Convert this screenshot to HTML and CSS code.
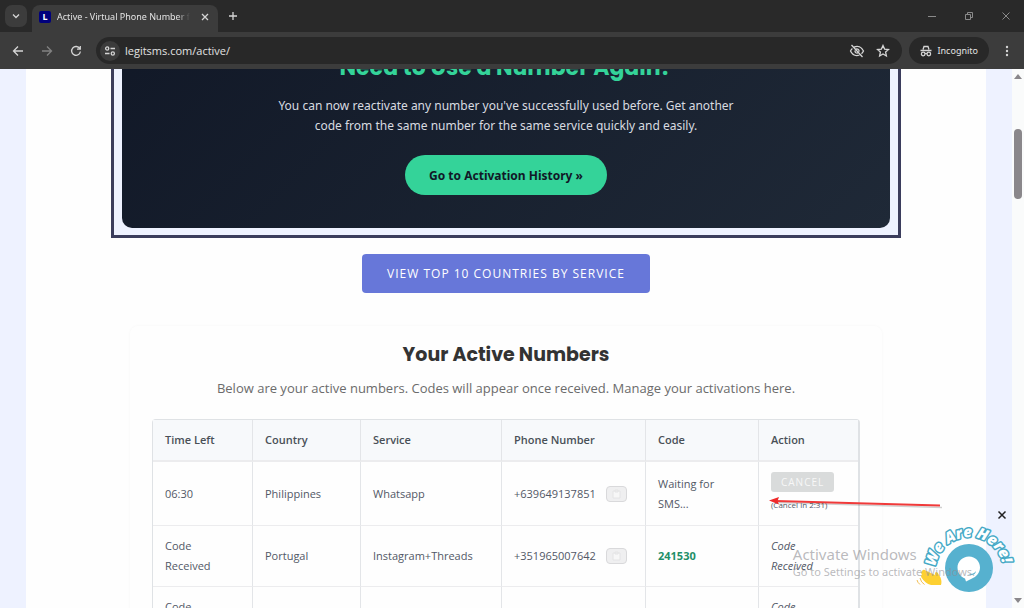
FILE: index.html
```html
<!DOCTYPE html>
<html lang="en">

<head>
    <meta charset="UTF-8" />
    <meta name="viewport" content="width=device-width, initial-scale=1.0" />
    <title>Active - Virtual Phone Number</title>
    <link rel="stylesheet" href="styles.css">
</head>

<body>
    <header class="browser">
        <div class="tab-strip">
            <button class="tab-search" aria-label="Search tabs">
                <svg width="10" height="10" viewBox="0 0 10 10"><path d="M2 3.5l3 3 3-3" /></svg>
            </button>
            <div class="tab">
                <span class="favicon">L</span>
                <span class="tab-title">Active - Virtual Phone Number f</span>
                <button class="icon-button" aria-label="Close tab">
                    <svg width="10" height="10" viewBox="0 0 10 10"><path d="M2 2l6 6M8 2l-6 6" /></svg>
                </button>
            </div>
            <button class="icon-button new-tab" aria-label="New tab">
                <svg width="10" height="10" viewBox="0 0 10 10"><path d="M5 1v8M1 5h8" /></svg>
            </button>
            <div class="window-buttons">
                <button class="icon-button" aria-label="Minimize">
                    <svg width="10" height="10" viewBox="0 0 10 10"><path d="M1 5.5h8" /></svg>
                </button>
                <button class="icon-button" aria-label="Restore">
                    <svg width="10" height="10" viewBox="0 0 10 10"><path d="M1.5 3.5h5v5h-5zM3.500 3V1.500h5v5H7" /></svg>
                </button>
                <button class="icon-button" aria-label="Close">
                    <svg width="10" height="10" viewBox="0 0 10 10"><path d="M1.500 1.500l7 7M8.500 1.500l-7 7" /></svg>
                </button>
            </div>
        </div>

        <div class="toolbar">
            <button class="icon-button" aria-label="Back">
                <svg width="12" height="12" viewBox="0 0 12 12"><path d="M11 6H2M6 1.500L1.500 6 6 10.500" /></svg>
            </button>
            <button class="icon-button dim" aria-label="Forward">
                <svg width="12" height="12" viewBox="0 0 12 12"><path d="M1 6h9M6 1.500L10.500 6 6 10.500" /></svg>
            </button>
            <button class="icon-button" aria-label="Reload">
                <svg width="12" height="12" viewBox="0 0 12 12"><path d="M9.800 3.600A4.400 4.400 0 1 0 10.400 6.500M10.300 1v3.200H7" /></svg>
            </button>
            <div class="address-bar">
                <button class="site-info" aria-label="View site information">
                    <svg width="12" height="12" viewBox="0 0 12 12"><circle cx="3.200" cy="3.500" r="1.600" /><path d="M6.500 3.500H11M1 8.500h4.500" /><circle cx="8.800" cy="8.500" r="1.600" /></svg>
                </button>
                <input class="url" type="text" value="legitsms.com/active/" aria-label="Address" />
                <button class="icon-button" aria-label="Third-party cookies blocked">
                    <svg width="16" height="14" viewBox="0 0 16 14"><path d="M5 3.100C8.800 1.300 12.500 3 14.500 7c-.5 1.100-1.200 2-2 2.700M10.500 11C6.800 12.300 3.300 10.700 1.500 7c.5-1 1.100-1.800 1.900-2.500M7 5c1.800-.7 3.500.9 3 2.600M8.800 9.100C7.200 9.500 5.700 8.300 6 6.500M2.500 1l11 12" /></svg>
                </button>
                <button class="icon-button" aria-label="Bookmark this tab">
                    <svg width="14" height="14" viewBox="0 0 14 14"><path d="M7 1.500l1.600 3.600 3.900.4-2.900 2.600.8 3.900L7 10l-3.400 2 .8-3.900-2.900-2.600 3.900-.4z" /></svg>
                </button>
            </div>
            <button class="incognito">
                <svg width="12" height="12" viewBox="0 0 12 12"><path d="M3 4.500L4 1.500h4l1 3M.5 5.500h11" /><circle cx="3.200" cy="9" r="1.800" /><circle cx="8.800" cy="9" r="1.800" /><path d="M5 8.700q1-.6 2 0" /></svg>
                Incognito
            </button>
            <button class="icon-button menu" aria-label="Menu">
                <svg width="4" height="14" viewBox="0 0 4 14"><circle cx="2" cy="3" r="1.200" /><circle cx="2" cy="7" r="1.200" /><circle cx="2" cy="11" r="1.200" /></svg>
            </button>
        </div>
    </header>

    <div class="viewport">
        <div class="page">
            <main class="content">
                <section class="promo-frame">
                    <div class="promo">
                        <h2>Need to Use a Number Again?</h2>
                        <p>You can now reactivate any number you've successfully used before. Get another<br>code from the same number for the same service quickly and easily.</p>
                        <a class="history-link" href="#">Go to Activation History »</a>
                    </div>
                </section>

                <a class="top-countries" href="#">VIEW TOP 10 COUNTRIES BY SERVICE</a>

                <section class="numbers">
                    <h2>Your Active Numbers</h2>
                    <p>Below are your active numbers. Codes will appear once received. Manage your activations here.</p>

                    <table>
                        <colgroup>
                            <col class="col-time">
                            <col class="col-country">
                            <col class="col-service">
                            <col class="col-phone">
                            <col class="col-code">
                            <col class="col-action">
                        </colgroup>
                        <thead>
                            <tr>
                                <th>Time Left</th>
                                <th>Country</th>
                                <th>Service</th>
                                <th>Phone Number</th>
                                <th>Code</th>
                                <th>Action</th>
                            </tr>
                        </thead>
                        <tbody>
                            <tr>
                                <td>06:30</td>
                                <td>Philippines</td>
                                <td>Whatsapp</td>
                                <td>
                                    <div class="phone">+639649137851
                                        <button class="copy" aria-label="Copy number"><svg width="9" height="10" viewBox="0 0 9 10"><path d="M1 2h7v7H1zM3 1h3v2H3z" /></svg></button>
                                    </div>
                                </td>
                                <td>Waiting for<br>SMS...</td>
                                <td>
                                    <button class="cancel" disabled>CANCEL</button>
                                    <small>(Cancel in 2:31)</small>
                                </td>
                            </tr>
                            <tr>
                                <td>Code<br>Received</td>
                                <td>Portugal</td>
                                <td>Instagram+Threads</td>
                                <td>
                                    <div class="phone">+351965007642
                                        <button class="copy" aria-label="Copy number"><svg width="9" height="10" viewBox="0 0 9 10"><path d="M1 2h7v7H1zM3 1h3v2H3z" /></svg></button>
                                    </div>
                                </td>
                                <td><strong>241530</strong></td>
                                <td><em>Code<br>Received</em></td>
                            </tr>
                            <tr>
                                <td>Code<br>Received</td>
                                <td></td>
                                <td></td>
                                <td></td>
                                <td></td>
                                <td><em>Code<br>Received</em></td>
                            </tr>
                        </tbody>
                    </table>
                </section>
            </main>
        </div>

        <div class="scrollbar">
            <svg width="8" height="5" viewBox="0 0 8 5"><path d="M4 0l4 5H0z" /></svg>
            <div class="track"><div class="thumb"></div></div>
            <svg width="8" height="5" viewBox="0 0 8 5"><path d="M0 0h8L4 5z" /></svg>
        </div>
    </div>

    <!-- arrow pointing at the cancel timer -->
    <svg class="arrow" width="176" height="16" viewBox="0 0 176 16">
        <path class="arrow-shadow" d="M10 6.500l164 5" />
        <path class="arrow-line" d="M8 5l164 4.500" />
        <path class="arrow-head" d="M1 4.500L11 1l-1.500 4L11 8.500z" />
    </svg>

    <!-- chat widget -->
    <div class="chat">
        <button class="chat-close" aria-label="Hide chat">
            <svg width="10" height="10" viewBox="0 0 10 10"><path d="M1.500 1.500l7 7M8.500 1.500l-7 7" /></svg>
        </button>
        <button class="chat-open" aria-label="Open chat">
            <svg width="104" height="80" viewBox="0 0 104 80">
                <defs>
                    <path id="chat-arc" d="M23.500 49A34 34 0 0 1 91 49V56" />
                </defs>
                <text class="chat-label"><textPath href="#chat-arc">We Are Here!</textPath></text>
                <circle cx="57" cy="50" r="24" fill="#56b1cf" />
                <path fill="#fff" d="M57 38.500c6.500 0 11 5 11 11 0 5.500-4 9.500-8 11L54 63.500l-1-3c-4.500-1.500-7.500-6-7.500-11 0-6 5-11 11.500-11z" />
                <path fill="#56b1cf" d="M55 56q6 1 9-3-1 6-9 3z" />
                <path fill="#fdd032" d="M10 53c1-1.500 2.500-1.500 4-.2l9 4.200c-.5-2.500 1-4 2.500-2.500l3 5c1 2.500 1.300 5 .5 7.500H19c-4-1-7.500-4-9.500-7.500-.8-1.500-.5-2.500.5-2.500-1-1.200-1-3 0-4z" />
                <path fill="none" stroke="#f3bd4e" d="M8 60q1 4.500 4.500 6.500M5 62q.5 2.500 3 4.500" />
            </svg>
        </button>
    </div>

    <div class="watermark">
        <div class="watermark-title">Activate Windows</div>
        <div>Go to Settings to activate Windows.</div>
    </div>
</body>

</html>
```
FILE: styles.css
```css
* {
    box-sizing: border-box;
}

body {
    margin: 0;
    height: 100vh;
    display: flex;
    flex-direction: column;
    position: relative;
    overflow: hidden;
    font-family: "Open Sans", sans-serif;
    font-size: 11px;
    line-height: 20px;
    color: #525866;
}

button {
    border: 0;
    padding: 0;
    background: none;
    font-family: inherit;
    cursor: pointer;
}

svg {
    display: block;
}

/* browser window */
.browser {
    background-color: #3c3c3c;
    color: #e3e3e3;
    font-family: "Noto Sans", sans-serif;
}

.browser svg {
    fill: none;
    stroke: #d5d5d5;
    stroke-width: 1.3;
}

.tab-strip {
    height: 32px;
    padding: 5px 9px 0 5px;
    display: flex;
    align-items: flex-start;
    background-color: #292929;
}

.tab-search {
    width: 22px;
    height: 22px;
    display: grid;
    place-items: center;
    border-radius: 7px;
    background-color: #3c3c3c;
}

.tab {
    width: 186px;
    height: 27px;
    margin-left: 5px;
    padding: 0 4px 4px 7px;
    display: flex;
    align-items: center;
    gap: 6px;
    border-radius: 8px 8px 0 0;
    background-color: #3c3c3c;
}

.favicon {
    width: 12px;
    height: 12px;
    border-radius: 2px;
    background-color: #00007c;
    color: white;
    font-size: 9px;
    font-weight: bold;
    line-height: 12px;
    text-align: center;
}

.tab-title {
    flex: 1;
    overflow: hidden;
    white-space: nowrap;
    font-size: 9px;
    -webkit-mask-image: linear-gradient(to right, black 90%, transparent);
    mask-image: linear-gradient(to right, black 90%, transparent);
}

.icon-button {
    width: 18px;
    height: 22px;
    flex: none;
    display: grid;
    place-items: center;
}

.new-tab {
    margin-left: 6px;
}

.window-buttons {
    margin-left: auto;
    display: flex;
    gap: 19px;
}

.window-buttons svg {
    stroke: #8a8a8a;
    stroke-width: 1;
}

.toolbar {
    height: 37px;
    padding: 0 8px 0 9px;
    display: flex;
    align-items: center;
    gap: 11px;
}

.dim {
    opacity: 0.45;
}

.address-bar {
    flex: 1;
    height: 27px;
    margin-right: -4px;
    padding: 0 10px 0 4px;
    display: flex;
    align-items: center;
    gap: 8px;
    border-radius: 14px;
    background-color: #282828;
}

.site-info {
    width: 20px;
    height: 20px;
    margin-right: -3px;
    display: grid;
    place-items: center;
    border-radius: 50%;
    background-color: #3c3c3c;
}

.url {
    flex: 1;
    min-width: 0;
    border: 0;
    padding: 0;
    background: transparent;
    color: #e3e3e3;
    font-family: "Open Sans", sans-serif;
    font-size: 11px;
}

.url:focus {
    outline: none;
}

.incognito {
    height: 27px;
    padding: 0 11px;
    display: flex;
    align-items: center;
    gap: 6px;
    border-radius: 14px;
    background-color: #282828;
    color: #e3e3e3;
    font-size: 9px;
}

.menu {
    margin-left: -2px;
}

.menu svg {
    fill: #d5d5d5;
    stroke: none;
}

/* page, scrolled down a little */
.viewport {
    flex: 1;
    min-height: 0;
    display: flex;
    overflow: hidden;
}

.page {
    flex: 1;
    padding: 0 26px;
    overflow: hidden;
    background-color: #eef2ff;
}

.content {
    margin-top: -61px;
    padding: 0 85px;
    display: flex;
    flex-direction: column;
    align-items: center;
    background-color: #fefefe;
}

h2 {
    margin: 0;
    font-family: Poppins, Inter, sans-serif;
    font-weight: bold;
    text-align: center;
}

.promo-frame {
    width: 100%;
    padding: 7px 8px;
    border: 3px solid #3b3d5c;
    background-color: #eef2ff;
}

.promo {
    padding: 33px;
    border-radius: 10px;
    background: linear-gradient(135deg, #111827, #1f2937);
    text-align: center;
}

.promo h2 {
    color: #34d399;
    font-size: 22px;
    line-height: 34px;
}

.promo p {
    margin: 11px 0 19px;
    color: #d8dbe0;
    font-family: "Noto Sans", sans-serif;
    font-size: 12px;
}

.history-link {
    display: inline-block;
    padding: 1px 24px 0;
    border-radius: 20px;
    background-color: #34d399;
    color: #111827;
    font-family: "Noto Sans", sans-serif;
    font-size: 12px;
    font-weight: bold;
    line-height: 39px;
    text-decoration: none;
    vertical-align: top;
}

.top-countries {
    margin: 16px 0 33px;
    padding: 0 25px;
    border-radius: 4px;
    background-color: #6777d9;
    color: white;
    font-size: 12px;
    letter-spacing: 1px;
    line-height: 39px;
    text-decoration: none;
}

.numbers {
    width: 752px;
    max-width: 100%;
    padding: 16px 22px;
    border-radius: 8px;
    box-shadow: 0 0 3px rgba(0, 0, 0, 0.04);
}

.numbers h2 {
    color: #333;
    font-size: 19px;
    line-height: 26px;
}

.numbers p {
    margin: 10px 0 21px;
    color: #6b6b6b;
    font-size: 13px;
    text-align: center;
}

table {
    width: 100%;
    table-layout: fixed;
    border: 1px solid #dfe2e5;
    border-right-width: 2px;
    border-radius: 4px;
    border-spacing: 0;
}

.col-time {
    width: 100px;
}

.col-country {
    width: 108px;
}

.col-service {
    width: 141px;
}

.col-phone {
    width: 144px;
}

.col-code {
    width: 113px;
}

th,
td {
    padding: 10px 0 10px 12px;
    border-right: 1px solid #e3e5e8;
    border-bottom: 1px solid #ececee;
    text-align: left;
}

th {
    border-bottom-width: 2px;
    background-color: #f7f9fb;
    font-weight: 600;
    color: #495057;
}

th:last-child,
td:last-child {
    border-right: 0;
}

.phone {
    display: flex;
    align-items: center;
    gap: 10px;
}

.copy {
    width: 21px;
    height: 16px;
    display: grid;
    place-items: center;
    border: 1px solid #d9d9db;
    border-radius: 4px;
    background-color: #efeff0;
}

.copy svg {
    fill: #f7f7f7;
    stroke: #e4e4e5;
}

strong {
    color: #1f8f68;
}

.cancel {
    display: block;
    height: 20px;
    padding: 0 10px;
    border-radius: 3px;
    background-color: #d9dbdb;
    color: #f7f7f7;
    font-size: 10px;
    letter-spacing: 1px;
}

small {
    display: block;
    margin-top: 3px;
    font-size: 8px;
}

.scrollbar {
    width: 12px;
    padding: 5px 0;
    display: flex;
    flex-direction: column;
    align-items: center;
    background-color: #fafbfb;
}

.scrollbar svg {
    fill: #8a878b;
}

.track {
    flex: 1;
    padding-top: 50px;
}

.thumb {
    width: 8px;
    height: 70px;
    border-radius: 4px;
    background-color: #8a878b;
}

/* things lying over the page */
.arrow {
    position: absolute;
    top: 496px;
    right: 80px;
    fill: none;
}

.arrow-shadow {
    stroke: rgba(0, 0, 0, 0.18);
    stroke-width: 1.5;
}

.arrow-line {
    stroke: #f03a3a;
    stroke-width: 2;
}

.arrow-head {
    fill: #f02a2a;
}

.chat {
    position: absolute;
    right: 8px;
    bottom: 10px;
    display: flex;
    flex-direction: column;
    align-items: flex-end;
    gap: 1px;
}

.chat-close {
    padding: 0 9px 0 0;
}

.chat-close svg {
    stroke: #222;
    stroke-width: 1.5;
}

.chat-open svg {
    margin-top: -3px;
    overflow: visible;
}

.chat-label {
    fill: white;
    stroke: #45a9c6;
    stroke-width: 3px;
    stroke-linejoin: round;
    paint-order: stroke;
    font-family: "Open Sans", sans-serif;
    font-size: 15px;
    font-style: italic;
    font-weight: 800;
}

.watermark {
    position: absolute;
    right: 49px;
    bottom: 27px;
    color: rgba(140, 140, 145, 0.6);
    font-family: "Noto Sans", sans-serif;
    font-size: 11px;
    line-height: 18px;
    pointer-events: none;
}

.watermark-title {
    font-size: 15px;
}
```
